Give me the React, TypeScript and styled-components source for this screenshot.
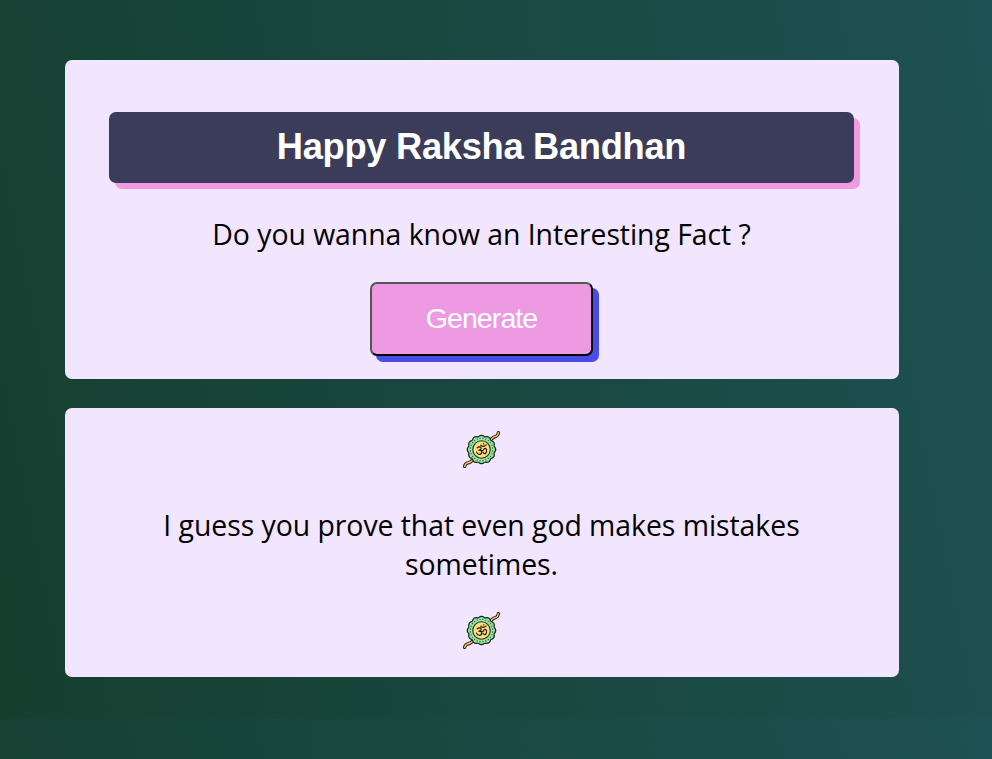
import React from "react";
import styled, { createGlobalStyle } from "styled-components";

const GlobalStyle = createGlobalStyle`
  html {
    background: #174237;
    height: 100%;
  }
  body {
    margin: 0;
    background: linear-gradient(79deg, #153f2f 0%, #1e5153 100%) 0 0 / 100% 719px repeat;
    min-height: 759px;
    overflow: hidden;
  }
`;

const Page = styled.main`
  display: flex;
  flex-direction: column;
  gap: 29px;
  width: 834px;
  margin: 0 0 0 65px;
  padding-top: 60px;
`;

const Card = styled.section`
  display: flex;
  flex-direction: column;
  align-items: center;
  box-sizing: border-box;
  background: #f2e5fe;
  border-radius: 7px;
`;

const PromptCard = styled(Card)`
  height: 319px;
  padding: 52px 45px 0 44px;
`;

const FactCard = styled(Card)`
  height: 269px;
  padding: 23px 1px 0 0;
`;

const Title = styled.h1`
  width: 100%;
  margin: 0;
  height: 71px;
  text-align: center;
  font: bold 36.3px/69px "Liberation Sans", Arial, sans-serif;
  letter-spacing: -0.31px;
  color: #fff;
  background: #3a3c5a;
  border-radius: 7px;
  box-shadow: 6px 6px 0 #ef9ae3;
`;

const Text = styled.p`
  margin: 0;
  font: 400 28.4px/39px "Open Sans", "Noto Sans", sans-serif;
  letter-spacing: -0.04px;
  color: #000;
  text-align: center;
  white-space: nowrap;
`;

const Question = styled(Text)`
  margin-top: 32px;
`;

const Fact = styled(Text)`
  margin: 38px 0 28px;
`;

const GenerateButton = styled.button`
  box-sizing: border-box;
  width: 223px;
  height: 74px;
  margin-top: 28px;
  padding: 0 0 2px;
  font: 28.5px "Liberation Sans", Arial, sans-serif;
  letter-spacing: -0.9px;
  color: #fff;
  background: #ee9ae3;
  border: 2px solid;
  border-color: #555 #000 #000 #555;
  border-radius: 7px;
  box-shadow: 6px 6px 0 #494ce6;
`;

const RakhiIcon = styled.svg`
  display: block;
  flex: none;
  width: 37px;
  height: 37px;
`;

const petals = Array.from({ length: 12 }, (_, i) => {
  const a = (i * Math.PI) / 6;
  return { x: 89 + 32 * Math.cos(a), y: 82 + 32 * Math.sin(a) };
});

const dots = Array.from({ length: 24 }, (_, i) => {
  const a = ((i + 0.5) * Math.PI) / 12;
  return { x: 89 + 34 * Math.cos(a), y: 82 + 34 * Math.sin(a) };
});

const Rakhi = () => (
  <RakhiIcon viewBox="33 26 112 112" aria-hidden="true">
    {["M116 53 Q125 43 133 42 Q139 40 140 31", "M38 133 Q39 125 46 123 Q55 122 64 113"].map((d) => (
      <g key={d} fill="none" strokeLinecap="round">
        <path d={d} stroke="#201c14" strokeWidth="10" />
        <path d={d} stroke="#f0c860" strokeWidth="4.4" />
      </g>
    ))}
    {petals.map((p, i) => (
      <circle key={i} cx={p.x} cy={p.y} r="11" fill="#95e3a0" stroke="#15231b" strokeWidth="4" />
    ))}
    <circle cx="89" cy="82" r="38" fill="#95e3a0" />
    {dots.map((p, i) => (
      <circle key={i} cx={p.x} cy={p.y} r="2" fill="#24563a" />
    ))}
    <circle cx="89" cy="82" r="26.5" fill="#ffdc80" stroke="#28301c" strokeWidth="3.4" />
    <g fill="none" stroke="#211b10" strokeWidth="3.6" strokeLinecap="round" strokeLinejoin="round">
      <path d="M76 77 Q79 73 84 74 Q90 76 87 81 Q85 84 81 84 Q89 84 90 89 Q90 96 83 97 Q76 97 74 90" />
      <path d="M89 85 Q94 87 96 81 Q101 76 104 82 Q106 90 101 94 Q96 95 94 91" />
      <path d="M87 69 Q95 76 103 68" />
      <path d="M95 65 L96 65" />
    </g>
  </RakhiIcon>
);

export default function App() {
  return (
    <>
      <GlobalStyle />
      <Page>
        <PromptCard>
          <Title>Happy Raksha Bandhan</Title>
          <Question>Do you wanna know an Interesting Fact ?</Question>
          <GenerateButton>Generate</GenerateButton>
        </PromptCard>
        <FactCard>
          <Rakhi />
          <Fact>
            I guess you prove that even god makes mistakes
            <br />
            sometimes.
          </Fact>
          <Rakhi />
        </FactCard>
      </Page>
    </>
  );
}
